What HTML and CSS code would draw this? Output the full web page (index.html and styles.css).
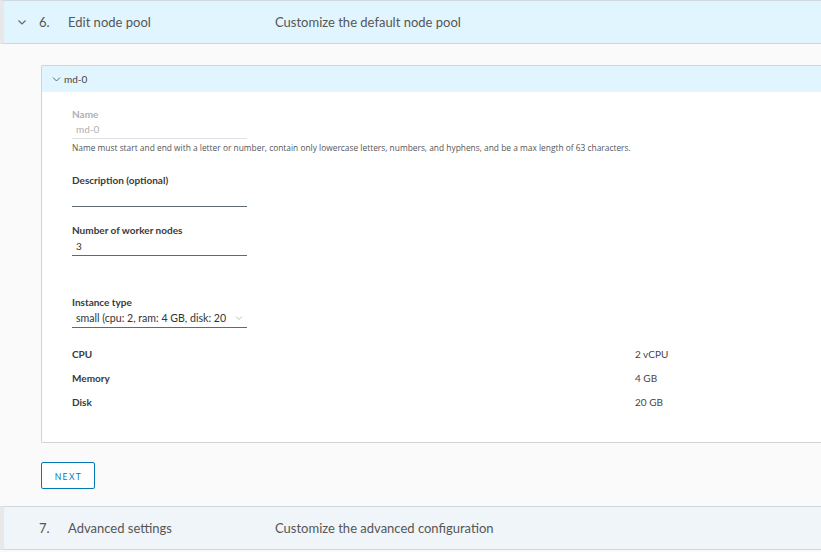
FILE: index.html
```html
<!DOCTYPE html>
<html>
<head>
<meta charset="utf-8">
<link rel="stylesheet" href="styles.css">
</head>
<body>
<div class="step step-active">
  <svg class="step-chevron" width="10" height="10" viewBox="0 0 10 10"><path d="M1.5 3.5 L5 7 L8.5 3.5" fill="none" stroke="#5a6b7a" stroke-width="1.2"/></svg>
  <span class="step-num">6.</span>
  <span class="step-title">Edit node pool</span>
  <span class="step-desc">Customize the default node pool</span>
</div>
<div class="step-content">
  <div class="card">
    <div class="card-header">
      <svg class="card-chevron" width="9" height="9" viewBox="0 0 9 9"><path d="M1 2.5 L4.5 6 L8 2.5" fill="none" stroke="#5a6b7a" stroke-width="1"/></svg>
      <span>md-0</span>
    </div>
    <div class="card-body">
      <div class="label label-disabled">Name</div>
      <div class="input input-disabled">md-0</div>
      <div class="helper">Name must start and end with a letter or number, contain only lowercase letters, numbers, and hyphens, and be a max length of 63 characters.</div>

      <div class="label label-desc">Description (optional)</div>
      <div class="input input-tall"></div>

      <div class="label label-workers">Number of worker nodes</div>
      <div class="input">3</div>

      <div class="label label-instance">Instance type</div>
      <div class="input select">
        <span>small (cpu: 2, ram: 4 GB, disk: 20</span>
        <svg class="select-chevron" width="8" height="6" viewBox="0 0 8 6"><path d="M1 1.5 L4 4.5 L7 1.5" fill="none" stroke="#b5b5b5" stroke-width="0.9"/></svg>
      </div>

      <div class="specs">
        <div class="spec-label">CPU</div><div class="spec-value">2 vCPU</div>
        <div class="spec-label">Memory</div><div class="spec-value">4 GB</div>
        <div class="spec-label">Disk</div><div class="spec-value">20 GB</div>
      </div>
    </div>
  </div>
  <button class="btn-next">NEXT</button>
</div>
<div class="step step-next">
  <span class="step-chevron-space"></span>
  <span class="step-num">7.</span>
  <span class="step-title">Advanced settings</span>
  <span class="step-desc">Customize the advanced configuration</span>
</div>
</body>
</html>
```
FILE: styles.css
```css
html, body {
  margin: 0;
  padding: 0;
  background: #fafafa;
  font-family: Lato, "Noto Sans", sans-serif;
  overflow: hidden;
}

.step {
  height: 42px;
  display: flex;
  align-items: center;
  border-top: 1px solid #cfd8df;
  border-bottom: 1px solid #cfd8df;
  border-left: 4px solid #e8e8e8;
  font-size: 13px;
  color: #565656;
}

.step-active {
  background: #e1f5fe;
}

.step-next {
  background: #eff5f9;
}

.step-chevron {
  margin-left: 13px;
  width: 10px;
}

.step-chevron-space {
  display: inline-block;
  margin-left: 13px;
  width: 10px;
}

.step-num {
  margin-left: 12px;
  width: 29px;
}

.step-title {
  width: 207px;
}

.step-content {
  padding: 21px 0 17px 41px;
}

.card {
  background: #fff;
  border: 1px solid #cfd4d8;
  border-right: none;
  margin-right: -10px;
  border-radius: 2px 0 0 2px;
}

.card-header {
  height: 26px;
  background: #e1f5fe;
  display: flex;
  align-items: center;
  font-size: 10px;
  color: #454545;
  padding-left: 10px;
}

.card-chevron {
  margin-right: 3px;
}

.card-body {
  padding: 15px 0 28px 30px;
}

.label {
  font-size: 10px;
  line-height: 14px;
  font-weight: 700;
  color: #3a3a3a;
}

.label-disabled {
  color: #b0b0b0;
}

.input {
  width: 171px;
  height: 18px;
  line-height: 18px;
  padding-left: 4px;
  border-bottom: 1px solid #5e6b74;
  font-size: 10px;
  color: #333;
}

.input-disabled {
  height: 17px;
  line-height: 17px;
  color: #b0b0b0;
  border-bottom-color: #dde3e8;
}

.input-tall {
  height: 19px;
}

.helper {
  margin-top: 3px;
  font-family: "Open Sans", "Noto Sans", sans-serif;
  font-size: 8.4px;
  line-height: 12px;
  color: #565656;
}

.label-desc {
  margin-top: 19px;
}

.label-workers {
  margin-top: 16px;
}

.label-instance {
  margin-top: 39px;
}

.select {
  display: flex;
  align-items: center;
  justify-content: space-between;
  padding-right: 4px;
  width: 167px;
  font-size: 10.6px;
}

.select-chevron {
  flex: none;
}

.specs {
  margin-top: 14px;
  display: grid;
  grid-template-columns: 563px 1fr;
  grid-auto-rows: 24px;
  align-items: center;
  font-size: 10px;
}

.spec-label {
  font-weight: 700;
  color: #3a3a3a;
}

.spec-value {
  color: #454545;
}

.btn-next {
  margin-top: 19px;
  width: 54px;
  height: 27px;
  border: 1px solid #0079b8;
  border-radius: 2px;
  background: #fff;
  color: #0079b8;
  font-family: Lato, "Noto Sans", sans-serif;
  font-size: 8.5px;
  letter-spacing: 1.4px;
  padding: 2px 0 0 1px;
  display: block;
}
```
